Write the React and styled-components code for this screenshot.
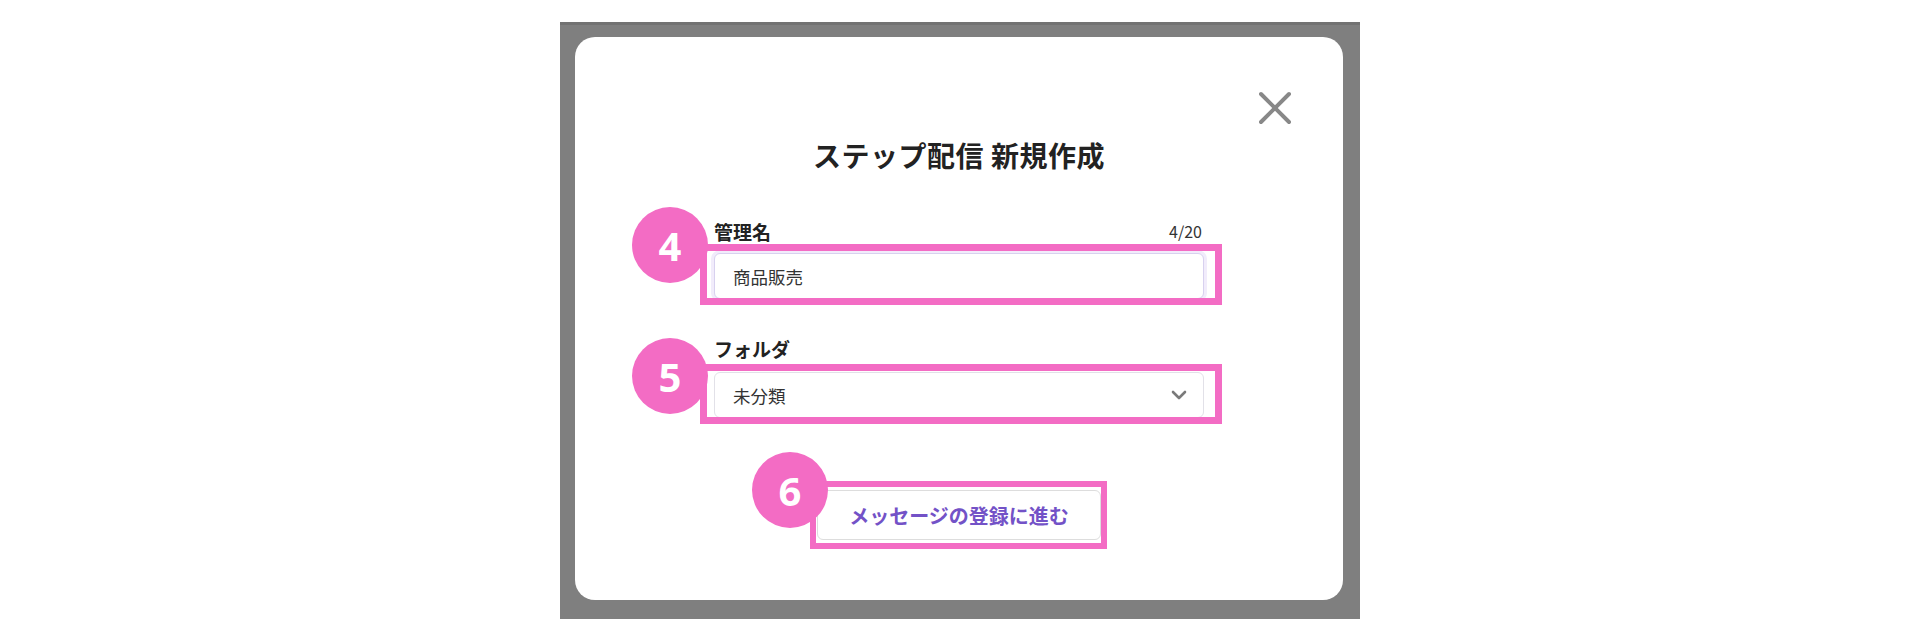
import React from "react";
import styled, { createGlobalStyle } from "styled-components";
import { X, ChevronDown } from "lucide-react";

const GlobalStyle = createGlobalStyle`
  html, body { margin: 0; padding: 0; background: #ffffff; }
  body { font-family: "Noto Sans CJK JP", "Noto Sans", sans-serif; }
  * { box-sizing: border-box; }
`;

const PINK = "#f36cc4";

const Page = styled.div`
  width: 1920px;
  height: 640px;
  display: flex;
  justify-content: center;
  padding-top: 22px;
`;

const Backdrop = styled.div`
  width: 800px;
  height: 597px;
  background: #7f7f7f;
  border-top: 3px solid #727272;
  padding: 12px 17px 19px 15px;
`;

const Modal = styled.div`
  width: 768px;
  height: 563px;
  background: #ffffff;
  border-radius: 20px;
  display: flex;
  flex-direction: column;
  align-items: center;
`;

const CloseRow = styled.div`
  width: 100%;
  height: 28px;
  display: flex;
  justify-content: flex-end;
  margin-top: 57px;
  padding-right: 53px;
`;

const CloseButton = styled.button`
  width: 30px;
  height: 28px;
  padding: 0;
  border: none;
  background: none;
  color: #888888;
  display: flex;
  align-items: center;
  justify-content: center;
  cursor: pointer;
  overflow: visible;
`;

const CloseIcon = styled(X)`
  flex-shrink: 0;
`;

const Title = styled.h2`
  margin: 13px 0 0;
  font-size: 28px;
  line-height: 40px;
  font-weight: 700;
  color: #222222;
  letter-spacing: 0.5px;
`;

const Form = styled.div`
  width: 490px;
  display: flex;
  flex-direction: column;
  margin-top: ${(p) => p.$top}px;
`;

const LabelRow = styled.div`
  display: flex;
  justify-content: space-between;
  align-items: center;
  height: 24px;
  margin-top: ${(p) => p.$top || 0}px;
  margin-bottom: ${(p) => p.$gap}px;
`;

const Label = styled.label`
  font-size: 19px;
  font-weight: 700;
  color: #222222;
`;

const Counter = styled.span`
  font-size: 16px;
  color: #333333;
  margin-right: 2px;
`;

const Highlight = styled.div`
  position: relative;
  align-self: ${(p) => p.$align || "stretch"};
  &::before {
    content: "";
    position: absolute;
    top: ${(p) => p.$inset[0]}px;
    right: ${(p) => p.$inset[1]}px;
    bottom: ${(p) => p.$inset[2]}px;
    left: ${(p) => p.$inset[3]}px;
    border: ${(p) => p.$bw}px solid ${PINK};
    pointer-events: none;
    z-index: 1;
  }
`;

const Badge = styled.div`
  position: absolute;
  left: ${(p) => p.$left}px;
  top: ${(p) => p.$top}px;
  width: 76px;
  height: 76px;
  border-radius: 50%;
  background: ${PINK};
  color: #ffffff;
  font-family: "Open Sans", "Noto Sans", sans-serif;
  font-weight: 700;
  font-size: 40px;
  display: flex;
  align-items: center;
  justify-content: center;
  z-index: 2;
`;

const TextInput = styled.input`
  display: block;
  width: 100%;
  height: 46px;
  border: 1px solid #d8d1ef;
  border-radius: 6px;
  box-shadow: 0 0 0 3px #f1ecfb;
  padding: 0 18px;
  font-family: "Noto Sans CJK JP", sans-serif;
  font-size: 17.5px;
  color: #333333;
  outline: none;
  background: #ffffff;
`;

const SelectBox = styled.div`
  height: 46px;
  border: 1px solid #e2e1e8;
  border-radius: 6px;
  padding: 0 12px 0 18px;
  display: flex;
  align-items: center;
  justify-content: space-between;
  font-size: 17.5px;
  color: #333333;
  background: #ffffff;
`;

const ChevronIcon = styled(ChevronDown)`
  color: #7a7a7a;
`;

const Actions = styled.div`
  margin-top: 72px;
  display: flex;
  justify-content: center;
`;

const PrimaryButton = styled.button`
  width: 284px;
  height: 50px;
  background: #ffffff;
  border: 1px solid #dddddd;
  border-radius: 6px;
  font-family: "Noto Sans CJK JP", sans-serif;
  font-size: 20px;
  font-weight: 700;
  color: #7352c7;
  cursor: pointer;
`;

export default function App() {
  return (
    <>
      <GlobalStyle />
      <Page>
        <Backdrop>
          <Modal>
            <CloseRow>
              <CloseButton aria-label="閉じる">
                <CloseIcon size={56} strokeWidth={1.7} />
              </CloseButton>
            </CloseRow>
            <Title>ステップ配信 新規作成</Title>

            <Form $top={44}>
              <LabelRow $gap={10}>
                <Label>管理名</Label>
                <Counter>4/20</Counter>
              </LabelRow>
              <Highlight $inset={[-9, -18, -6, -14]} $bw={7}>
                <Badge $left={-82} $top={-46}>4</Badge>
                <TextInput defaultValue="商品販売" readOnly />
              </Highlight>

              <LabelRow $top={37} $gap={12}>
                <Label>フォルダ</Label>
              </LabelRow>
              <Highlight $inset={[-8, -18, -6, -14]} $bw={7}>
                <Badge $left={-82} $top={-34}>5</Badge>
                <SelectBox>
                  <span>未分類</span>
                  <ChevronIcon size={24} strokeWidth={2.6} />
                </SelectBox>
              </Highlight>

              <Actions>
                <Highlight $inset={[-9, -6, -9, -7]} $bw={6} $align="center">
                  <Badge $left={-65} $top={-38}>6</Badge>
                  <PrimaryButton>メッセージの登録に進む</PrimaryButton>
                </Highlight>
              </Actions>
            </Form>
          </Modal>
        </Backdrop>
      </Page>
    </>
  );
}
